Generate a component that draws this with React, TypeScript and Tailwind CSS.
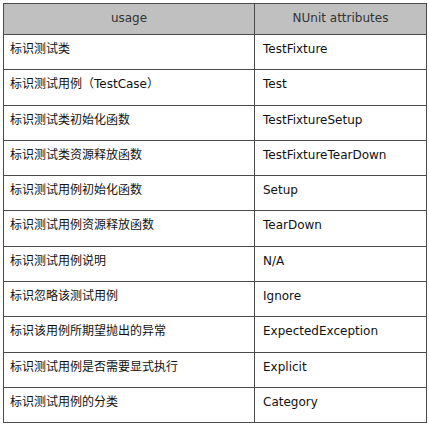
const rows: [string, string][] = [
  ["标识测试类", "TestFixture"],
  ["标识测试用例（TestCase）", "Test"],
  ["标识测试类初始化函数", "TestFixtureSetup"],
  ["标识测试类资源释放函数", "TestFixtureTearDown"],
  ["标识测试用例初始化函数", "Setup"],
  ["标识测试用例资源释放函数", "TearDown"],
  ["标识测试用例说明", "N/A"],
  ["标识忽略该测试用例", "Ignore"],
  ["标识该用例所期望抛出的异常", "ExpectedException"],
  ["标识测试用例是否需要显式执行", "Explicit"],
  ["标识测试用例的分类", "Category"],
];

export default function App() {
  return (
    <div className="w-[429px] h-[427px] bg-white pl-[3px] pt-[3px] font-['DejaVu_Sans','Noto_Sans_CJK_SC',sans-serif] text-[12px] leading-[14px]">
      <table className="w-[423px] border-collapse table-fixed border border-[#4a4a4a]">
        <colgroup>
          <col className="w-[251px]" />
          <col className="w-[172px]" />
        </colgroup>
        <thead>
          <tr className="h-[31px] bg-[#c0c0c0] text-[#333]">
            <th className="border border-[#4a4a4a] font-normal text-center align-middle pb-[2px]">usage</th>
            <th className="border border-[#4a4a4a] font-normal text-center align-middle pb-[2px]">NUnit attributes</th>
          </tr>
        </thead>
        <tbody>
          {rows.map(([usage, attr]) => (
            <tr key={attr} className="h-[35.3px] text-[#111]">
              <td className="border border-[#4a4a4a] align-top pt-[7px] pl-[6px]">{usage}</td>
              <td className="border border-[#4a4a4a] align-top pt-[7px] pl-[8px]">{attr}</td>
            </tr>
          ))}
        </tbody>
      </table>
    </div>
  );
}
